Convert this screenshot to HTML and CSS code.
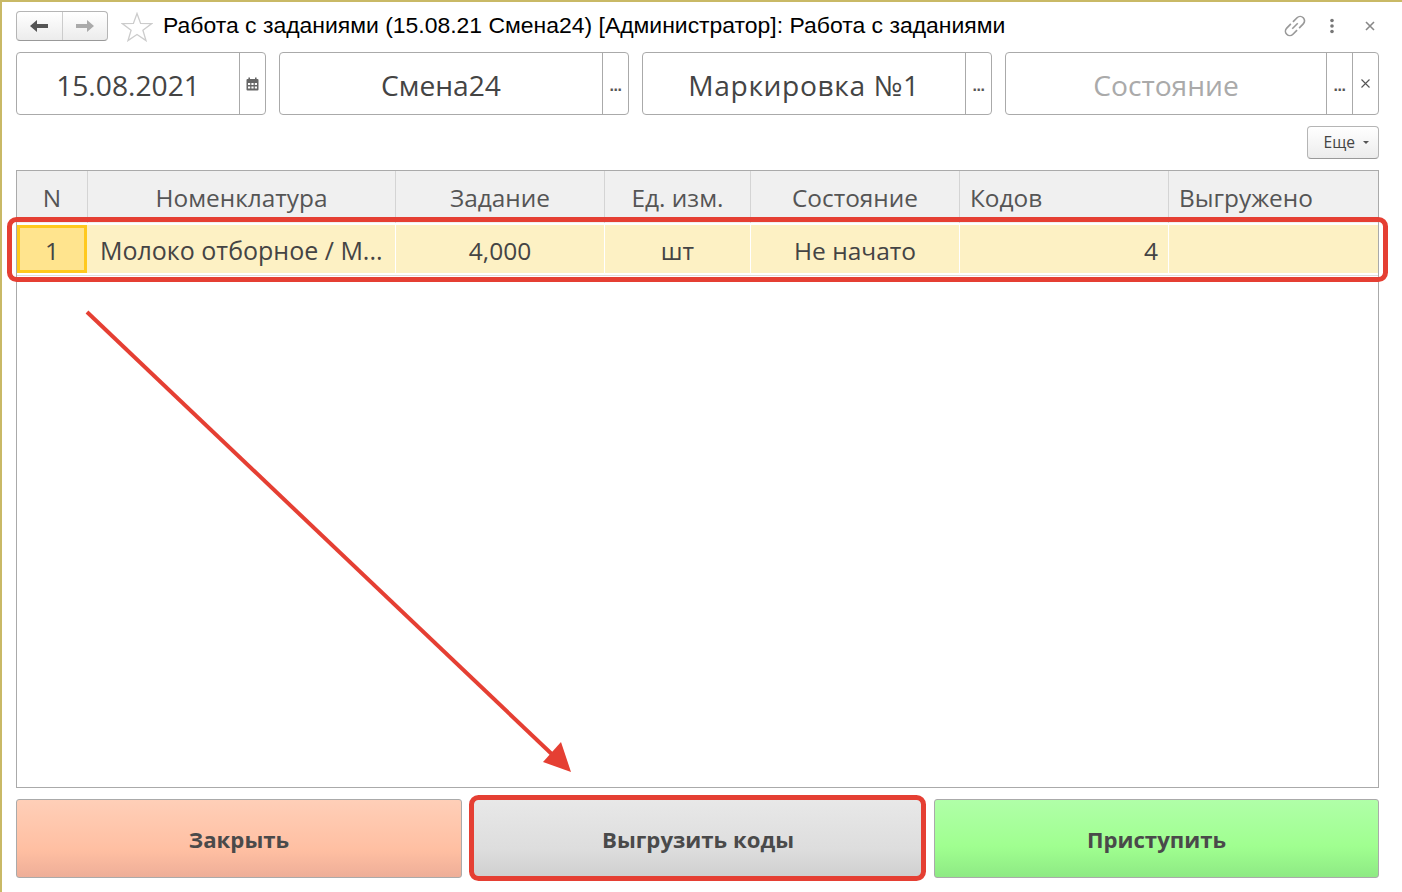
FILE: index.html
```html
<!DOCTYPE html>
<html lang="ru">
<head>
    <meta charset="UTF-8">
    <title>Работа с заданиями</title>
    <link rel="stylesheet" href="styles.css">
</head>
<body>
    <div id="window">
        <div class="title-bar">
            <div class="nav-group">
                <div class="nav-btn">
                    <svg width="20" height="14" viewBox="0 0 20 14"><path d="M1 7 L8 1 V5 H19 V9 H8 V13 Z" fill="#555"/></svg>
                </div>
                <div class="nav-btn">
                    <svg width="20" height="14" viewBox="0 0 20 14"><path d="M19 7 L12 1 V5 H1 V9 H12 V13 Z" fill="#aaa"/></svg>
                </div>
            </div>
            <svg class="star" width="32" height="30" viewBox="0 0 32 30"><path d="M16 1.5 L19.6 11.4 L30.5 11.7 L21.9 18.2 L25 28.6 L16 22.5 L7 28.6 L10.1 18.2 L1.5 11.7 L12.4 11.4 Z" fill="#fff" stroke="#ccc" stroke-width="1.3"/></svg>
            <div class="title">Работа с заданиями (15.08.21 Смена24) [Администратор]: Работа с заданиями</div>
            <div class="title-tools">
                <svg class="link-icon" width="22" height="22" viewBox="3 3 16 16" fill="none" stroke="#999" stroke-width="1.2"><path d="M9.5 8 L12.5 5 a3 3 0 0 1 4.5 4.5 L14 12.5"/><path d="M12.5 14 L9.5 17 a3 3 0 0 1 -4.5 -4.5 L8 9.5"/><path d="M9 13 L13 9"/></svg>
                <svg width="6" height="16" viewBox="0 0 6 16"><circle cx="3" cy="2.5" r="1.8" fill="#777"/><circle cx="3" cy="8" r="1.8" fill="#777"/><circle cx="3" cy="13.5" r="1.8" fill="#777"/></svg>
                <svg width="10" height="10" viewBox="0 0 10 10"><path d="M1 1 L9 9 M9 1 L1 9" stroke="#888" stroke-width="1.6"/></svg>
            </div>
        </div>

        <div class="filters">
            <div class="field field-date">
                <div class="field-value">15.08.2021</div>
                <div class="field-btn">
                    <svg width="13" height="14" viewBox="0 0 13 14"><rect x="0.5" y="2" width="12" height="11.5" rx="1" fill="#666"/><path d="M3.2 0.5 V3 M9.8 0.5 V3" stroke="#666" stroke-width="1.6"/><path d="M2 6 H4.2 V8 H2 Z M5.4 6 H7.6 V8 H5.4 Z M8.8 6 H11 V8 H8.8 Z M2 9.5 H4.2 V11.5 H2 Z M5.4 9.5 H7.6 V11.5 H5.4 Z M8.8 9.5 H11 V11.5 H8.8 Z" fill="#fff"/></svg>
                </div>
            </div>
            <div class="field field-wide">
                <div class="field-value">Смена24</div>
                <div class="field-btn"><span class="dots">...</span></div>
            </div>
            <div class="field field-wide">
                <div class="field-value spaced">Маркировка №1</div>
                <div class="field-btn"><span class="dots">...</span></div>
            </div>
            <div class="field field-state">
                <div class="field-value placeholder">Состояние</div>
                <div class="field-btn"><span class="dots">...</span></div>
                <div class="field-btn">
                    <svg width="9" height="9" viewBox="0 0 9 9"><path d="M0.5 0.5 L8.5 8.5 M8.5 0.5 L0.5 8.5" stroke="#555" stroke-width="1.1"/></svg>
                </div>
            </div>
        </div>

        <div class="more-row">
            <div class="more-btn">Еще <span class="caret"></span></div>
        </div>

        <div class="table">
            <div class="row head">
                <div class="cell c-n">N</div>
                <div class="cell c-name">Номенклатура</div>
                <div class="cell c-task">Задание</div>
                <div class="cell c-unit">Ед. изм.</div>
                <div class="cell c-state">Состояние</div>
                <div class="cell c-codes left">Кодов</div>
                <div class="cell c-done left">Выгружено</div>
            </div>
            <div class="row current">
                <div class="cell c-n active">1</div>
                <div class="cell c-name left"><span class="clip">Молоко отборное / М...</span></div>
                <div class="cell c-task">4,000</div>
                <div class="cell c-unit">шт</div>
                <div class="cell c-state">Не начато</div>
                <div class="cell c-codes right">4</div>
                <div class="cell c-done"></div>
            </div>
        </div>

        <div class="actions">
            <div class="action red">Закрыть</div>
            <div class="action grey">Выгрузить коды</div>
            <div class="action green">Приступить</div>
        </div>
    </div>

    <svg id="marks" width="1402" height="892" viewBox="0 0 1402 892">
        <rect x="9.5" y="219.5" width="1376" height="60" rx="7" fill="none" stroke="#e53f33" stroke-width="5"/>
        <rect x="471.5" y="797.5" width="452" height="81" rx="7" fill="none" stroke="#e53f33" stroke-width="5"/>
        <path d="M87 312 L557 759" stroke="#e53f33" stroke-width="4" fill="none"/>
        <path d="M571 772 L561 742 L543 762 Z" fill="#e53f33"/>
    </svg>
</body>
</html>
```

FILE: styles.css
```css
html, body {
    margin: 0;
    padding: 0;
    background: #fff;
}

body {
    width: 1402px;
    height: 892px;
    overflow: hidden;
    position: relative;
    font-family: "Open Sans", "Noto Sans", sans-serif;
    color: #444;
}

#window {
    box-sizing: border-box;
    width: 1402px;
    height: 892px;
    border-top: 2px solid #c9b966;
    border-left: 2px solid #c9b966;
    padding: 9px 23px 0 14px;
    display: flex;
    flex-direction: column;
}

#marks {
    position: absolute;
    left: 0;
    top: 0;
}

/* title */
.title-bar {
    display: flex;
    align-items: center;
    height: 30px;
}

.nav-group {
    display: flex;
    width: 92px;
    height: 30px;
    box-sizing: border-box;
    border: 1px solid #b5b5b5;
    border-bottom-color: #999;
    border-radius: 4px;
    background: linear-gradient(#fff, #ececec);
}

.nav-btn {
    flex: 1;
    display: flex;
    align-items: center;
    justify-content: center;
}

.nav-btn + .nav-btn {
    border-left: 1px solid #ccc;
}

.star {
    margin-left: 13px;
    margin-top: 2px;
}

.title {
    margin-left: 10px;
    padding-bottom: 2px;
    font-family: "Liberation Sans", Arial, sans-serif;
    font-size: 22.95px;
    color: #000;
    white-space: nowrap;
}

.title-tools {
    margin-left: auto;
    display: flex;
    align-items: center;
    gap: 30px;
    margin-right: 4px;
}

.link-icon {
    margin-right: -7px;
}

/* filters */
.filters {
    display: flex;
    gap: 13px;
    margin-top: 11px;
}

.field {
    box-sizing: border-box;
    height: 63px;
    display: flex;
    border: 1px solid #aaa;
    border-radius: 4px;
}

.field-date {
    width: 250px;
}

.field-wide {
    width: 350px;
}

.field-state {
    width: 374px;
}

.field-value {
    flex: 1;
    display: flex;
    align-items: center;
    justify-content: center;
    padding-top: 2px;
    font-size: 28.2px;
    color: #444;
}

.spaced {
    letter-spacing: 0.6px;
}

.placeholder {
    color: #aaa;
}

.field-btn {
    width: 25px;
    border-left: 1px solid #aaa;
    display: flex;
    align-items: center;
    justify-content: center;
}

.dots {
    font-family: "Liberation Sans", Arial, sans-serif;
    font-size: 16px;
    font-weight: 700;
    letter-spacing: -0.5px;
    line-height: 1;
    margin-top: 4px;
    color: #555;
}

.more-row {
    display: flex;
    justify-content: flex-end;
    margin-top: 11px;
}

.more-btn {
    box-sizing: border-box;
    width: 72px;
    height: 33px;
    display: flex;
    align-items: center;
    justify-content: flex-end;
    gap: 8px;
    padding: 0 9px 2px 0;
    font-size: 15.6px;
    border: 1px solid #b5b5b5;
    border-bottom-color: #999;
    border-radius: 4px;
    background: linear-gradient(#fff, #ececec);
}

.caret {
    width: 0;
    height: 0;
    border-left: 3px solid transparent;
    border-right: 3px solid transparent;
    border-top: 3px solid #555;
    margin-top: 2px;
}

/* table */
.table {
    box-sizing: border-box;
    height: 618px;
    margin-top: 11px;
    border: 1px solid #aaa;
}

.row {
    display: flex;
}

.head {
    height: 52px;
    background: #f0f0f0;
    color: #555;
    font-size: 24.4px;
}

.current {
    height: 48px;
    margin-top: 2px;
    background: #fdf1c4;
    color: #444;
    font-size: 24.5px;
    box-shadow: 0 2px 0 #fff, 0 3px 0 #ddd;
}

.cell {
    box-sizing: border-box;
    display: flex;
    align-items: center;
    justify-content: center;
    padding: 2px 10px 0;
    border-right: 1px solid #fff;
    white-space: nowrap;
}

.head .cell {
    border-right: 1px solid #d4d4d4;
    padding-top: 1px;
}

.cell.left {
    justify-content: flex-start;
}

.cell.right {
    justify-content: flex-end;
}

.c-n { width: 71px; }
.c-name { width: 308px; }
.c-task { width: 209px; }
.c-unit { width: 146px; }
.c-state { width: 209px; }
.c-codes { width: 209px; }
.c-done { flex: 1; border-right: 0 !important; }

.cell.active {
    width: 70px;
    margin-right: 1px;
    background: #ffe48e;
    border: 3px solid #ffc91e;
}

.clip {
    margin-left: 2px;
    font-size: 25px;
}

/* buttons */
.actions {
    display: flex;
    gap: 11px;
    margin-top: 11px;
}

.action {
    box-sizing: border-box;
    height: 79px;
    display: flex;
    align-items: center;
    justify-content: center;
    padding-top: 2px;
    font-size: 22.2px;
    font-weight: 700;
    color: #4a4a4a;
    border: 1px solid #aaa;
    border-radius: 3px;
}

.red {
    width: 446px;
    background: linear-gradient(#ffcfb8, #ffbfa2 65%, #eeae98);
}

.grey {
    flex: 1;
    background: linear-gradient(#e8e8e8, #dddddd 65%, #cfcfcf);
}

.green {
    width: 445px;
    background: linear-gradient(#b0ffa8, #a0ff90 60%, #8eea84);
}
```
